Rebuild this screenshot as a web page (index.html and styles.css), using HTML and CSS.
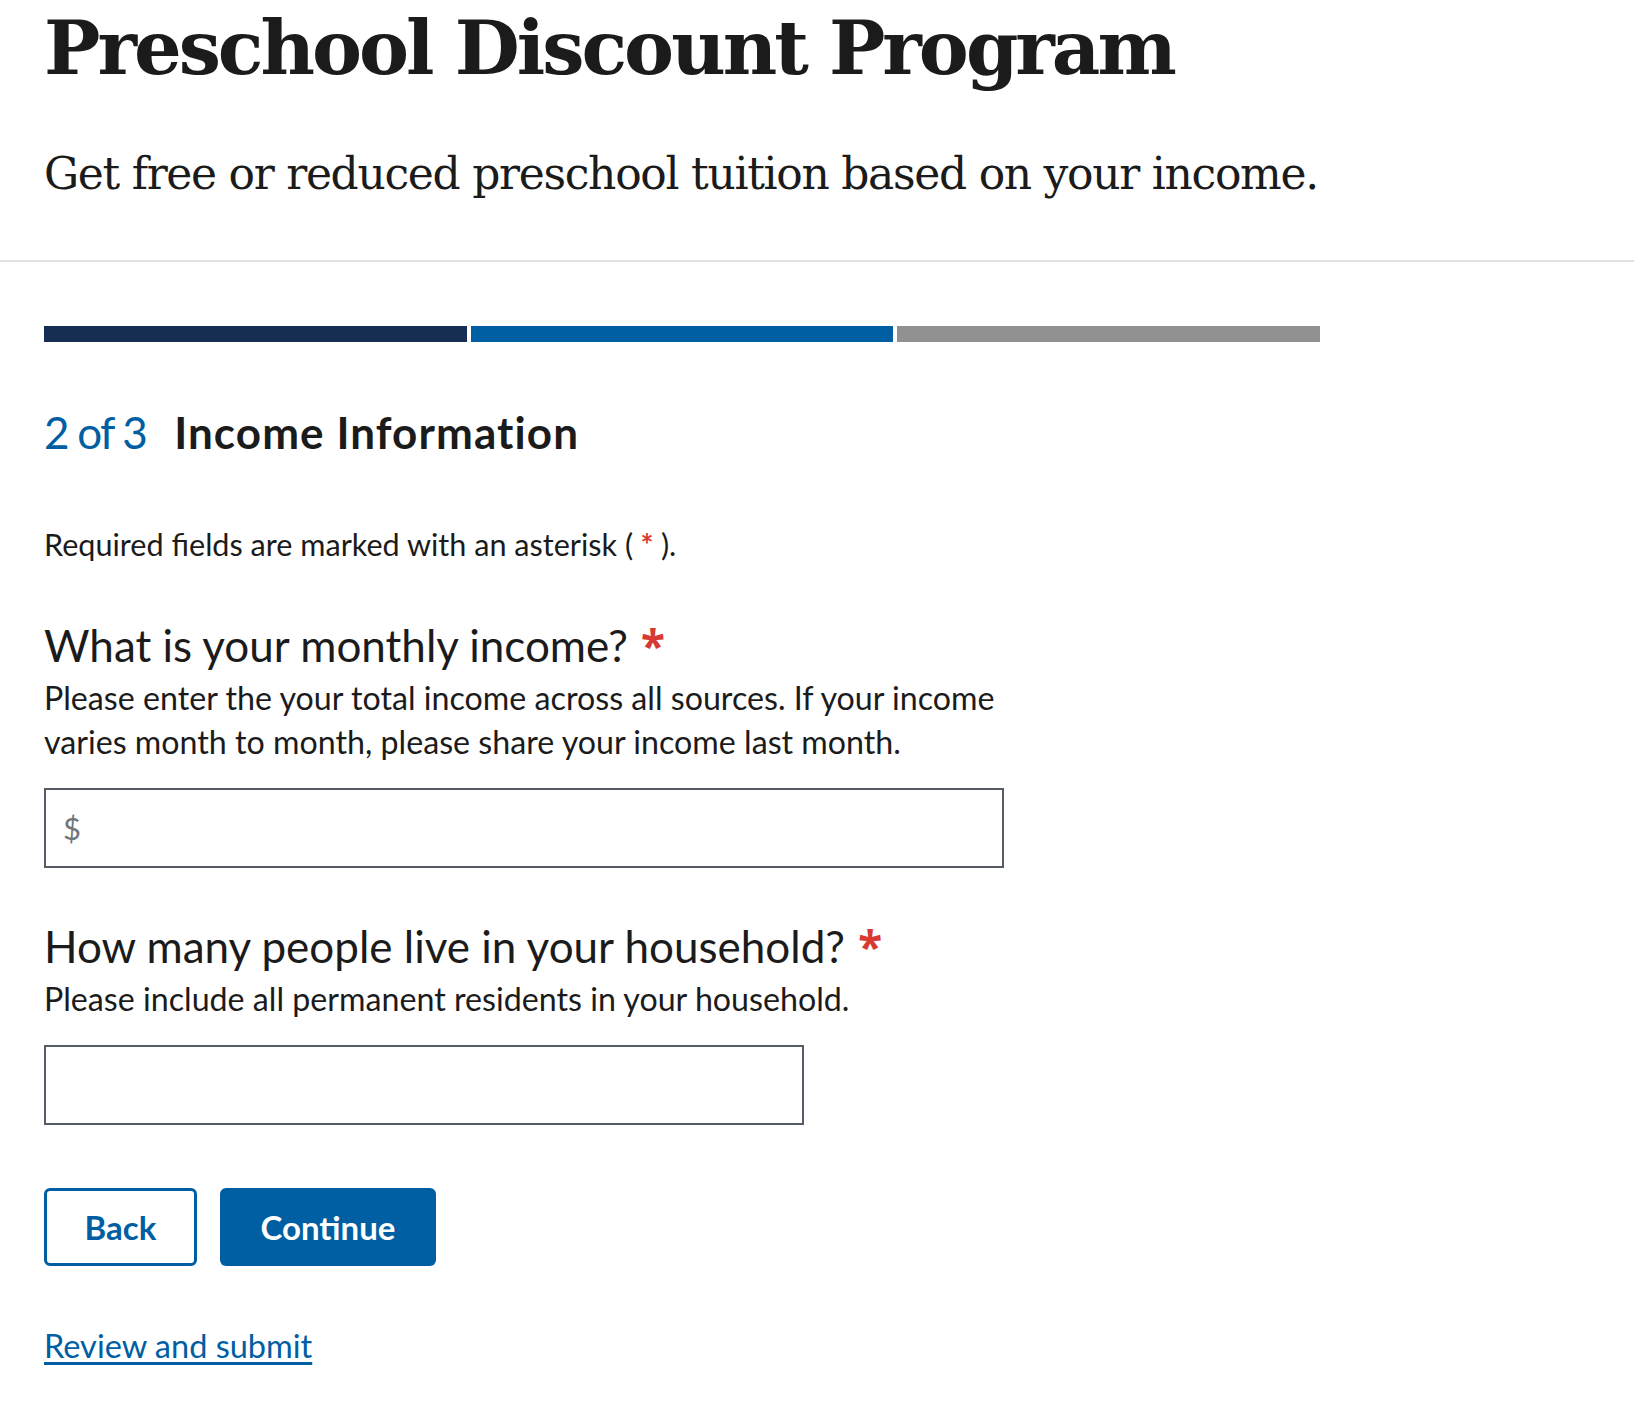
FILE: index.html
```html
<!DOCTYPE html>
<html lang="en">
<head>
<meta charset="utf-8">
<title>Preschool Discount Program</title>
<link rel="stylesheet" href="styles.css">
</head>
<body>
<header class="intro">
  <h1 class="intro-title">Preschool Discount Program</h1>
  <p class="intro-lead">Get free or reduced preschool tuition based on your income.</p>
</header>
<main class="page">
  <div class="steps">
    <div class="step step-done"></div>
    <div class="step step-current"></div>
    <div class="step step-todo"></div>
  </div>
  <h2 class="step-heading"><span class="step-count">2 of 3</span><span class="step-title">Income Information</span></h2>
  <p class="required-note">Required fields are marked with an asterisk (<span class="req"> * </span>).</p>
  <form class="form">
    <div class="field">
      <label class="field-label" for="income">What is your monthly income? <span class="req">*</span></label>
      <div class="field-hint">Please enter the your total income across all sources. If your income varies month to month, please share your income last month.</div>
      <div class="input-wrap input-wide">
        <span class="prefix">$</span>
        <input class="input" id="income" type="text">
      </div>
    </div>
    <div class="field">
      <label class="field-label" for="household">How many people live in your household? <span class="req">*</span></label>
      <div class="field-hint">Please include all permanent residents in your household.</div>
      <div class="input-wrap input-medium">
        <input class="input" id="household" type="text">
      </div>
    </div>
    <div class="actions">
      <button type="button" class="btn btn-outline">Back</button>
      <button type="button" class="btn btn-primary">Continue</button>
    </div>
    <a class="review-link" href="#">Review and submit</a>
  </form>
</main>
</body>
</html>
```

FILE: styles.css
```css
html, body {
  margin: 0;
  padding: 0;
  background: #ffffff;
}
body {
  font-family: "Lato", "Noto Sans", sans-serif;
  color: #1b1b1b;
}
.intro {
  padding: 0 44px 0 44px;
  border-bottom: 2px solid #dfe1e2;
  height: 262px;
  box-sizing: border-box;
}
.intro-title {
  margin: 0;
  font-family: "DejaVu Serif", serif;
  font-weight: 700;
  font-size: 75px;
  line-height: 96px;
  letter-spacing: -3px;
}
.intro-lead {
  margin: 48px 0 0 0;
  font-family: "DejaVu Serif", serif;
  font-size: 44px;
  line-height: 60px;
  letter-spacing: -1.3px;
}
.page {
  padding: 0 44px;
}
.steps {
  display: flex;
  gap: 4px;
  width: 1276px;
  margin-top: 64px;
}
.step {
  flex: 1;
  height: 16px;
}
.step-done { background: #162e51; }
.step-current { background: #005ea2; }
.step-todo { background: #919191; }
.step-heading {
  margin: 60px 0 0 0;
  font-size: 44px;
  line-height: 60px;
  font-weight: 400;
}
.step-count {
  color: #005ea2;
  margin-right: 28px;
  letter-spacing: -1.75px;
}
.step-title {
  font-weight: 700;
  letter-spacing: 1.1px;
}
.required-note {
  margin: 61px 0 0 0;
  font-size: 30.6px;
  line-height: 44px;
}
.req {
  color: #d83933;
  font-weight: 700;
}
.form {
  margin: 0;
}
.field {
  margin-top: 52px;
}
.field-label {
  display: block;
  font-size: 44px;
  line-height: 52px;
}
.field-label .req {
  font-family: "Noto Sans", sans-serif;
  margin-left: 2px;
}
.field-hint {
  margin-top: 5px;
  font-size: 32.2px;
  line-height: 44px;
  width: 960px;
}
.input-wrap {
  display: flex;
  align-items: center;
  margin-top: 24px;
  height: 80px;
  box-sizing: border-box;
  border: 2px solid #565c65;
  background: #fff;
}
.input-wide { width: 960px; }
.input-medium { width: 760px; }
.prefix {
  font-size: 31px;
  color: #71767a;
  padding-left: 17px;
}
.input {
  flex: 1;
  border: 0;
  outline: 0;
  height: 100%;
  font: inherit;
  font-size: 31px;
  padding: 0 12px;
  background: transparent;
}
.actions {
  display: flex;
  gap: 23px;
  margin-top: 63px;
}
.btn {
  font-family: inherit;
  font-weight: 700;
  font-size: 33px;
  height: 78px;
  border-radius: 6px;
  box-sizing: border-box;
  cursor: pointer;
}
.btn-outline {
  width: 153px;
  background: #fff;
  color: #005ea2;
  border: 3px solid #005ea2;
}
.btn-primary {
  width: 216px;
  background: #005ea2;
  color: #fff;
  border: 0;
}
.review-link {
  display: inline-block;
  margin-top: 58px;
  font-size: 32.5px;
  line-height: 44px;
  color: #005ea2;
  text-decoration: underline;
  text-underline-offset: 4px;
}
```
